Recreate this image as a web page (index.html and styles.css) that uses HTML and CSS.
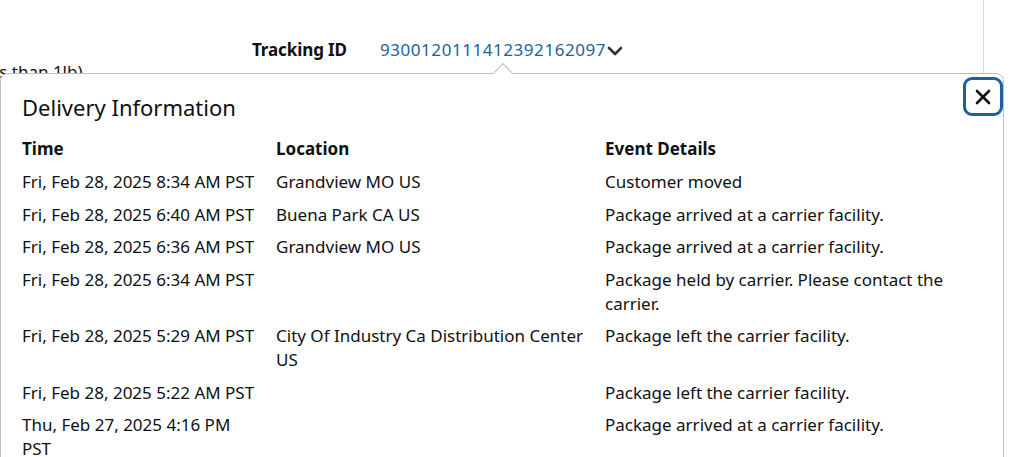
FILE: index.html
```html
<!DOCTYPE html>
<html lang="en">
<head>
<meta charset="utf-8">
<title>Delivery Information</title>
<link rel="stylesheet" href="styles.css">
</head>
<body>
<div class="page">
  <div class="tracking-row">
    <span class="tracking-label">Tracking ID</span>
    <a class="tracking-number" href="#">9300120111412392162097</a>
    <svg class="chevron" width="16" height="10" viewBox="0 0 16 10" aria-hidden="true"><path d="M2 2l6 6 6-6" fill="none" stroke="#333" stroke-width="2.6" stroke-linecap="round" stroke-linejoin="round"/></svg>
  </div>
  <div class="weight-note">(less than 1lb)</div>
</div>

<div class="popover">
  <span class="popover-arrow"></span>
  <button class="close-btn" aria-label="Close">
    <svg width="18" height="18" viewBox="0 0 18 18" aria-hidden="true"><path d="M3 3l12 12M15 3L3 15" stroke="#0f1111" stroke-width="2.6" stroke-linecap="round"/></svg>
  </button>
  <h2 class="popover-title">Delivery Information</h2>
  <div class="events">
    <div class="ev-row ev-head">
      <div class="cell">Time</div>
      <div class="cell">Location</div>
      <div class="cell">Event Details</div>
    </div>
    <div class="ev-row">
      <div class="cell">Fri, Feb 28, 2025 8:34 AM PST</div>
      <div class="cell">Grandview MO US</div>
      <div class="cell">Customer moved</div>
    </div>
    <div class="ev-row">
      <div class="cell">Fri, Feb 28, 2025 6:40 AM PST</div>
      <div class="cell">Buena Park CA US</div>
      <div class="cell">Package arrived at a carrier facility.</div>
    </div>
    <div class="ev-row">
      <div class="cell">Fri, Feb 28, 2025 6:36 AM PST</div>
      <div class="cell">Grandview MO US</div>
      <div class="cell">Package arrived at a carrier facility.</div>
    </div>
    <div class="ev-row">
      <div class="cell">Fri, Feb 28, 2025 6:34 AM PST</div>
      <div class="cell"></div>
      <div class="cell">Package held by carrier. Please contact the carrier.</div>
    </div>
    <div class="ev-row">
      <div class="cell">Fri, Feb 28, 2025 5:29 AM PST</div>
      <div class="cell">City Of Industry Ca Distribution Center US</div>
      <div class="cell">Package left the carrier facility.</div>
    </div>
    <div class="ev-row">
      <div class="cell">Fri, Feb 28, 2025 5:22 AM PST</div>
      <div class="cell"></div>
      <div class="cell">Package left the carrier facility.</div>
    </div>
    <div class="ev-row">
      <div class="cell">Thu, Feb 27, 2025 4:16 PM PST</div>
      <div class="cell"></div>
      <div class="cell">Package arrived at a carrier facility.</div>
    </div>
  </div>
</div>
</body>
</html>
```
FILE: styles.css
```css
* { box-sizing: border-box; }

html, body {
  margin: 0;
  padding: 0;
  height: 100%;
  overflow: hidden;
  background: #fff;
}

body {
  position: relative;
  font-family: "Noto Sans", "Open Sans", sans-serif;
  font-size: 17px;
  line-height: 24px;
  color: #0f1111;
}

/* background page */
.page {
  width: 984px;
  height: 457px;
  border-right: 1px solid #d5d9d9;
  padding-top: 38px;
  overflow: hidden;
}

.tracking-row {
  display: flex;
  align-items: center;
  padding-left: 252px;
  height: 24px;
}

.tracking-label {
  flex: 0 0 128px;
  font-weight: 700;
  letter-spacing: -0.1px;
}

.tracking-number {
  color: #2162a1;
  text-decoration: none;
  letter-spacing: 0.55px;
}

.chevron {
  margin-left: 1px;
  margin-top: 1px;
}

.weight-note {
  margin-top: -2px;
  text-indent: -28px;
  white-space: nowrap;
}

/* popover */
.popover {
  position: absolute;
  top: 73px;
  left: 0;
  width: 1004px;
  height: 420px;
  background: #fff;
  border: 1px solid #bbbfbf;
  border-radius: 8px;
  padding: 18px 38px 0 21px;
}

.popover-arrow {
  position: absolute;
  top: -8px;
  left: 495px;
  width: 14px;
  height: 14px;
  background: #fff;
  border-top: 1px solid #bbbfbf;
  border-left: 1px solid #bbbfbf;
  transform: rotate(45deg);
}

.close-btn {
  position: absolute;
  top: 3px;
  right: 0;
  width: 40px;
  height: 39px;
  padding: 0;
  display: flex;
  align-items: center;
  justify-content: center;
  background: #fff;
  border: 3px solid #1f5f9f;
  border-radius: 9px;
  cursor: pointer;
}

.popover-title {
  margin: 0;
  font-size: 22px;
  line-height: 30px;
  font-weight: 400;
}

.events {
  margin-top: 15px;
}

.ev-row {
  display: grid;
  grid-template-columns: 254px 329px 1fr;
  padding: 4.25px 0;
}

.ev-head {
  padding: 0 0 5px;
  font-weight: 700;
}

.ev-row .cell:nth-child(1) { padding-right: 18px; }
.ev-row .cell:nth-child(2) { padding-right: 14px; }
```
